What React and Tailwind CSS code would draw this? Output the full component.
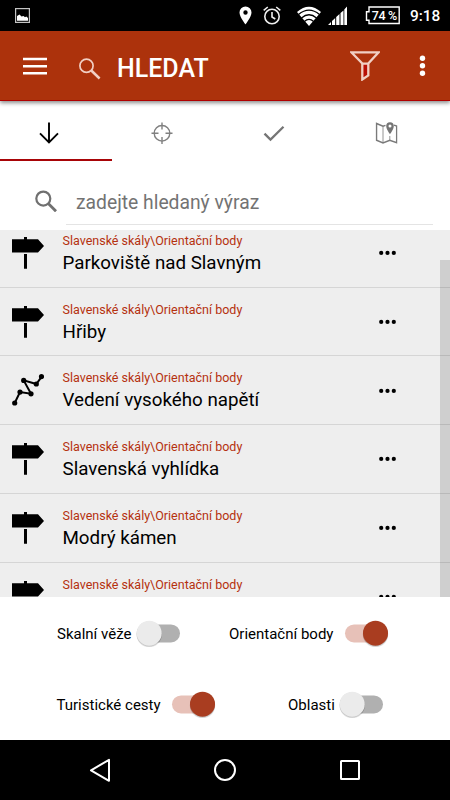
import React from "react";

const rows = [
  ["sign", "Parkoviště nad Slavným"],
  ["sign", "Hřiby"],
  ["line", "Vedení vysokého napětí"],
  ["sign", "Slavenská vyhlídka"],
  ["sign", "Modrý kámen"],
  ["sign", ""],
];

function StatusBar() {
  return (
    <div className="flex h-[31px] shrink-0 items-center bg-black text-white">
      <svg className="ml-[15px] h-[15px] w-[15px]" viewBox="0 0 15 15">
        <rect x=".6" y=".6" width="13.8" height="13.8" fill="none" stroke="#c4c4c4" strokeWidth="1.2" />
        <path d="M2 12.8V8l2.5-1.5 2 2 2-.5 1.5 1.2 1.3-.7L13 10v2.8z" fill="#fff" />
      </svg>
      <svg className="ml-[209px] h-[19px] w-[13px]" viewBox="0 0 13 19">
        <path fillRule="evenodd" d="M6.5.5A6 6 0 0 0 .5 6.600C.5 11 6.500 18.500 6.500 18.500S12.500 11 12.500 6.600A6 6 0 0 0 6.500.5zm0 3.800a2.200 2.200 0 1 1 0 4.400 2.200 2.200 0 0 1 0-4.400z" fill="#fff" />
      </svg>
      <svg className="ml-[11px] h-[19px] w-[18px]" viewBox="0 0 18 19" fill="none" stroke="#eee" strokeWidth="1.6">
        <circle cx="9" cy="10.500" r="7.200" />
        <path d="M9 6v5l3.300 2M.7 4.300 4.800 1M17.300 4.300 13.200 1" />
      </svg>
      <svg className="mt-px ml-[15px] h-[20px] w-[26px]" viewBox="0 0 26 20">
        <path d="M1 6Q13-4.500 25 6L13 20z" fill="#fff" />
        <path d="M2.500 8.500Q13-.2 23.500 8.500M5.500 12Q13 5.500 20.500 12M8.400 15.400Q13 11.500 17.600 15.400" fill="none" stroke="#000" strokeWidth="1.300" />
      </svg>
      <svg className="ml-[6px] h-[19px] w-[20px]" viewBox="0 0 20 19">
        <path d="M0 19h3v-3zM4 19h3.200v-7L4 15zM8.200 19h3.300V8l-3.300 3zM12.500 19h3V4.500l-3 2.500zM16.300 19H19V.5l-2.700 3z" fill="#fff" />
      </svg>
      <svg className="ml-[17px] h-[19px] w-[36px] shrink-0" viewBox="0 0 36 19">
        <path d="M4 1h30.200v16.500H4v-3.300H1.500V5.800H4z" fill="none" stroke="#fff" strokeWidth="1.400" />
        <text x="6.800" y="13.900" fill="#fff" fontFamily="Roboto, sans-serif" fontWeight="500" fontSize="12.500" textLength="25.500">74 %</text>
      </svg>
      <span className="ml-[9px] pt-px text-[15.400px] font-medium leading-5">9:18</span>
    </div>
  );
}

function Header() {
  return (
    <header className="relative z-10 flex h-[70px] shrink-0 items-center border-b border-[#b00000] bg-[#ac320c] text-white shadow-[0_2px_4px_rgba(0,0,0,0.45)]">
      <svg className="ml-[23px] h-[18px] w-6" viewBox="0 0 24 18">
        <path d="M0 2h24M0 9.200h24M0 16.200h24" stroke="#fff" strokeWidth="2.600" />
      </svg>
      <svg className="mt-[7px] ml-8 h-[22px] w-[22px]" viewBox="0 0 22 22" fill="none" stroke="#f1cfc4">
        <circle cx="7.500" cy="7.700" r="6.600" strokeWidth="1.700" />
        <path d="m12.300 12.500 8.300 8" strokeWidth="2.500" />
      </svg>
      <h1 className="ml-4 pt-[6px] text-[25px] font-medium leading-7">HLEDAT</h1>
      <svg className="ml-auto h-[30px] w-[30px]" viewBox="0 0 30 30">
        <path d="M13 13h5v10l-5 4z" fill="#b80f05" />
        <path d="M1.300 1.300h27.400L18.300 12.500V24.500l-6 4V12.500zM12.300 12.600h6" fill="none" stroke="#f1cfc4" strokeWidth="2.300" />
      </svg>
      <svg className="mr-[24px] ml-[39px] h-[22px] w-[7px]" viewBox="0 0 7 22" fill="#fff">
        <circle cx="3.500" cy="3.200" r="2.700" />
        <circle cx="3.500" cy="10.800" r="2.700" />
        <circle cx="3.500" cy="18.300" r="2.700" />
      </svg>
    </header>
  );
}

function Tabs() {
  return (
    <nav className="grid h-[60px] shrink-0 grid-cols-[112px_113px_112px_113px]">
      <div className="flex justify-center border-b-2 border-[#a80508] pt-[21px]">
        <svg className="h-[22px] w-5 translate-x-[-7px]" viewBox="0 0 20 22" fill="none" stroke="#000" strokeWidth="1.900">
          <path d="M10 .5v20M1 11.300l9 9 9-9" />
        </svg>
      </div>
      <div className="flex justify-center pt-[21px]">
        <svg className="h-[22px] w-[22px] translate-x-[-7px]" viewBox="0 0 22 22" fill="none" stroke="#808080" strokeWidth="1.400">
          <circle cx="11" cy="11.300" r="7.800" />
          <path d="M11 .5v7M11 15v7M.5 11.300h7M14.500 11.300h7" />
        </svg>
      </div>
      <div className="flex justify-center pt-6">
        <svg className="h-[17px] w-[22px] translate-x-[-7px]" viewBox="0 0 22 17" fill="none" stroke="#757575" strokeWidth="2.300">
          <path d="m1.500 8.600 6 6L20.500 1.800" />
        </svg>
      </div>
      <div className="flex justify-center pt-[21px]">
        <svg className="h-[22px] w-[22px] translate-x-[-7.500px]" viewBox="0 0 22 22" fill="none" stroke="#7a7a7a" strokeWidth="1.500">
          <path d="M10 3.400 7.500 4.300 1 1.500V18.200L7.500 21l6.800-2.800 6.900 2.400V4l-2.700-.9" />
          <path d="M7.500 4.300V21M14.300 14v4" strokeWidth=".8" />
          <path d="M14.500.3a3.800 3.800 0 0 0-3.800 3.800c0 3.200 3.800 8.200 3.800 8.200s3.800-5 3.800-8.200A3.800 3.800 0 0 0 14.500.3zm0 2.200a1.500 1.500 0 1 1 0 3 1.500 1.500 0 0 1 0-3z" fill="#757575" stroke="none" fillRule="evenodd" />
        </svg>
      </div>
    </nav>
  );
}

function Search() {
  return (
    <div className="flex h-[69px] shrink-0 pr-[17px] pl-[35px]">
      <svg className="mt-[29px] h-[22px] w-[22px]" viewBox="0 0 22 22" fill="none" stroke="#707070">
        <circle cx="8.300" cy="8.600" r="7" strokeWidth="2.200" />
        <path d="m13.500 13.800 7.500 7.500" strokeWidth="2.800" />
      </svg>
      <div className="ml-[9px] h-[64px] flex-1 border-b border-[#e4e4e4] pt-[28px] pl-[10px] text-[19.300px] leading-7 text-[#737373]">
        zadejte hledaný výraz
      </div>
    </div>
  );
}

function RowIcon({ kind }) {
  return (
    <svg className="mt-[18px] ml-3 h-[33px] w-8 shrink-0" viewBox="0 0 32 33">
      {kind === "sign" ? (
        <path d="M12 0h3v2.200h11L32 8.900l-6 6.500H0V2.200h12zM12 17h3v14.700h-3z" />
      ) : (
        <>
          <path d="M2.700 29 8 18.100l11 1.700-7.300-13.400L24.300 10l5.400-7.400" fill="none" stroke="#000" strokeWidth="2" />
          {[[2.7, 29], [8, 18.1], [19, 19.8], [11.7, 6.4], [24.3, 10], [29.5, 2.6]].map(([x, y]) => (
            <circle key={x} cx={x} cy={y} r="2.600" />
          ))}
        </>
      )}
    </svg>
  );
}

function Row({ kind, title }) {
  return (
    <div className="flex h-[68.750px] shrink-0 border-b border-[#d5d5d5]">
      <RowIcon kind={kind} />
      <div className="ml-[18.500px] pt-[14px] whitespace-nowrap">
        <div className="text-[12.500px] leading-4 text-[#b5310f]">Slavenské skály\Orientační body</div>
        {title && <div className="mt-[2px] text-[18.750px] leading-6 text-black">{title}</div>}
      </div>
      <svg className="mt-[31.250px] mr-[54px] ml-auto h-[6px] w-[17px]" viewBox="0 0 17 6">
        <circle cx="2.200" cy="2.900" r="2.100" />
        <circle cx="8.500" cy="2.900" r="2.100" />
        <circle cx="14.800" cy="2.900" r="2.100" />
      </svg>
    </div>
  );
}

function Toggle({ on }) {
  return (
    <svg className="h-8 w-[46px] shrink-0" viewBox="0 .4 46 32">
      <rect x={on ? 1 : 2} y="6.800" width="43" height="18" rx="9" fill={on ? "#e7c1b8" : "#b0b0b0"} />
      <circle cx={on ? 31.5 : 14.2} cy="16.800" r="12.700" fill="#000" opacity=".12" />
      <circle cx={on ? 31.5 : 14.2} cy="16.300" r="12.600" fill="#000" opacity=".12" />
      <circle cx={on ? 31.5 : 14.2} cy="15.600" r="12.500" fill={on ? "#a93d20" : "#ebebeb"} />
    </svg>
  );
}

export default function App() {
  return (
    <div className="flex h-[800px] w-[450px] flex-col overflow-hidden bg-white font-[Roboto,sans-serif]">
      <StatusBar />
      <Header />
      <Tabs />
      <Search />
      <main className="relative h-[367px] shrink-0 overflow-hidden bg-[#eee]">
        <div className="-mt-[11.250px] flex flex-col">
          {rows.map(([kind, title]) => (
            <Row key={title} kind={kind} title={title} />
          ))}
        </div>
        <div className="absolute top-[30px] right-0 bottom-0 w-[10px] bg-black/[0.13]" />
      </main>
      <section className="flex h-[143px] shrink-0 flex-col pt-[21px] text-[15px] leading-8 text-black">
        <div className="flex h-[71px]">
          <span className="ml-[57px] w-[78px]">Skalní věže</span>
          <Toggle />
          <span className="ml-[48px] w-[115px]">Orientační body</span>
          <Toggle on />
        </div>
        <div className="flex h-[51px]">
          <span className="ml-[56.500px] w-[114.500px]">Turistické cesty</span>
          <Toggle on />
          <span className="ml-[71px] w-[49.500px]">Oblasti</span>
          <Toggle />
        </div>
      </section>
      <footer className="flex h-[60px] shrink-0 items-center bg-black">
        <svg className="ml-[89px] h-6 w-[22px]" viewBox="0 0 22 24" fill="none" stroke="#fff" strokeWidth="2" strokeLinejoin="round">
          <path d="M2 12.300 20 1.800v21z" />
        </svg>
        <svg className="ml-[102px] h-6 w-6" viewBox="0 0 24 24" fill="none" stroke="#fff" strokeWidth="2">
          <circle cx="12" cy="12" r="10" />
        </svg>
        <svg className="ml-[102px] h-[22px] w-[22px]" viewBox="0 0 22 22" fill="none" stroke="#fff" strokeWidth="2">
          <rect x="2" y="2" width="18" height="18" rx=".5" />
        </svg>
      </footer>
    </div>
  );
}
